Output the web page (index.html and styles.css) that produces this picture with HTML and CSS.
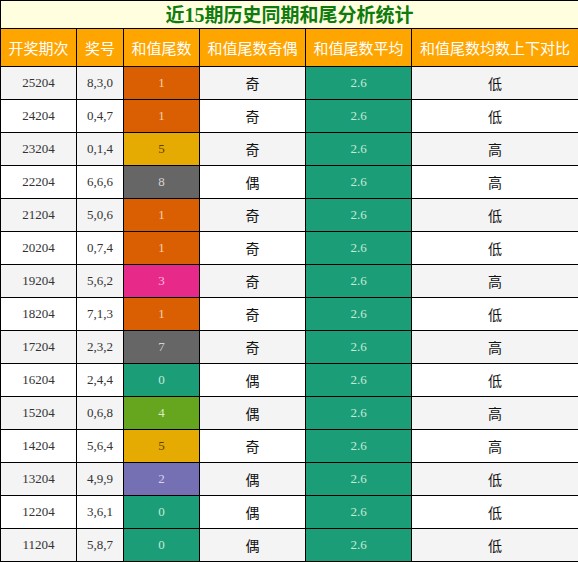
FILE: index.html
```html
<!DOCTYPE html>
<html>
<head>
<meta charset="utf-8">
<link rel="stylesheet" href="styles.css">
</head>
<body>
<table class="stat">
<colgroup>
<col class="c1"><col class="c2"><col class="c3"><col class="c4"><col class="c5"><col class="c6">
</colgroup>
<tr class="title-row"><td colspan="6" class="title">近<span class="num">15</span>期历史同期和尾分析统计</td></tr>
<tr class="head-row"><th>开奖期次</th><th>奖号</th><th>和值尾数</th><th>和值尾数奇偶</th><th>和值尾数平均</th><th>和值尾数均数上下对比</th></tr>
<tr class="odd"><td class="n">25204</td><td class="n">8,3,0</td><td class="n t1">1</td><td class="z">奇</td><td class="n avg">2.6</td><td class="z">低</td></tr>
<tr class="even"><td class="n">24204</td><td class="n">0,4,7</td><td class="n t1">1</td><td class="z">奇</td><td class="n avg">2.6</td><td class="z">低</td></tr>
<tr class="odd"><td class="n">23204</td><td class="n">0,1,4</td><td class="n t5">5</td><td class="z">奇</td><td class="n avg">2.6</td><td class="z">高</td></tr>
<tr class="even"><td class="n">22204</td><td class="n">6,6,6</td><td class="n t8">8</td><td class="z">偶</td><td class="n avg">2.6</td><td class="z">高</td></tr>
<tr class="odd"><td class="n">21204</td><td class="n">5,0,6</td><td class="n t1">1</td><td class="z">奇</td><td class="n avg">2.6</td><td class="z">低</td></tr>
<tr class="even"><td class="n">20204</td><td class="n">0,7,4</td><td class="n t1">1</td><td class="z">奇</td><td class="n avg">2.6</td><td class="z">低</td></tr>
<tr class="odd"><td class="n">19204</td><td class="n">5,6,2</td><td class="n t3">3</td><td class="z">奇</td><td class="n avg">2.6</td><td class="z">高</td></tr>
<tr class="even"><td class="n">18204</td><td class="n">7,1,3</td><td class="n t1">1</td><td class="z">奇</td><td class="n avg">2.6</td><td class="z">低</td></tr>
<tr class="odd"><td class="n">17204</td><td class="n">2,3,2</td><td class="n t7">7</td><td class="z">奇</td><td class="n avg">2.6</td><td class="z">高</td></tr>
<tr class="even"><td class="n">16204</td><td class="n">2,4,4</td><td class="n t0">0</td><td class="z">偶</td><td class="n avg">2.6</td><td class="z">低</td></tr>
<tr class="odd"><td class="n">15204</td><td class="n">0,6,8</td><td class="n t4">4</td><td class="z">偶</td><td class="n avg">2.6</td><td class="z">高</td></tr>
<tr class="even"><td class="n">14204</td><td class="n">5,6,4</td><td class="n t5">5</td><td class="z">奇</td><td class="n avg">2.6</td><td class="z">高</td></tr>
<tr class="odd"><td class="n">13204</td><td class="n">4,9,9</td><td class="n t2">2</td><td class="z">偶</td><td class="n avg">2.6</td><td class="z">低</td></tr>
<tr class="even"><td class="n">12204</td><td class="n">3,6,1</td><td class="n t0">0</td><td class="z">偶</td><td class="n avg">2.6</td><td class="z">低</td></tr>
<tr class="odd"><td class="n">11204</td><td class="n">5,8,7</td><td class="n t0">0</td><td class="z">偶</td><td class="n avg">2.6</td><td class="z">低</td></tr>
</table>
</body>
</html>
```
FILE: styles.css
```css
html, body {
  margin: 0;
  padding: 0;
  background: #ffffff;
}
.stat {
  width: 578px;
  border-collapse: collapse;
  table-layout: fixed;
  font-family: "Noto Sans CJK SC", "Noto Sans", sans-serif;
}
.c1 { width: 76px; }
.c2 { width: 47px; }
.c3 { width: 76px; }
.c4 { width: 106px; }
.c5 { width: 106px; }
.c6 { width: 167px; }
.stat td, .stat th {
  border: 1px solid #000;
  padding: 0;
  text-align: center;
  vertical-align: middle;
}
.title-row { height: 28px; }
.title {
  background: #ffffe0;
  color: #0f7b0f;
  font-size: 19px;
  font-weight: bold;
  line-height: 26px;
}
.title .num {
  font-family: "Liberation Serif", serif;
  font-size: 20px;
}
.head-row { height: 38px; }
.head-row th {
  background: #ffa500;
  color: #fff;
  font-size: 15px;
  font-weight: normal;
}
.odd, .even { height: 33px; }
.odd { background: #f4f4f4; }
.even { background: #ffffff; }
.n {
  font-family: "Liberation Serif", serif;
  font-size: 13px;
  color: #333;
}
.z {
  font-size: 14px;
  color: #111;
}
.avg { background: #1b9e77; color: #c4e9da; }
.t0 { background: #1b9e77; color: #c4e9da; }
.t1 { background: #d95f02; color: #f6cfaf; }
.t2 { background: #7570b3; color: #d6d4ea; }
.t3 { background: #e7298a; color: #f8bddb; }
.t4 { background: #66a61e; color: #d6ebc6; }
.t5 { background: #e6ab02; color: #5a4300; }
.t7, .t8 { background: #666666; color: #d2d2d2; }
```
